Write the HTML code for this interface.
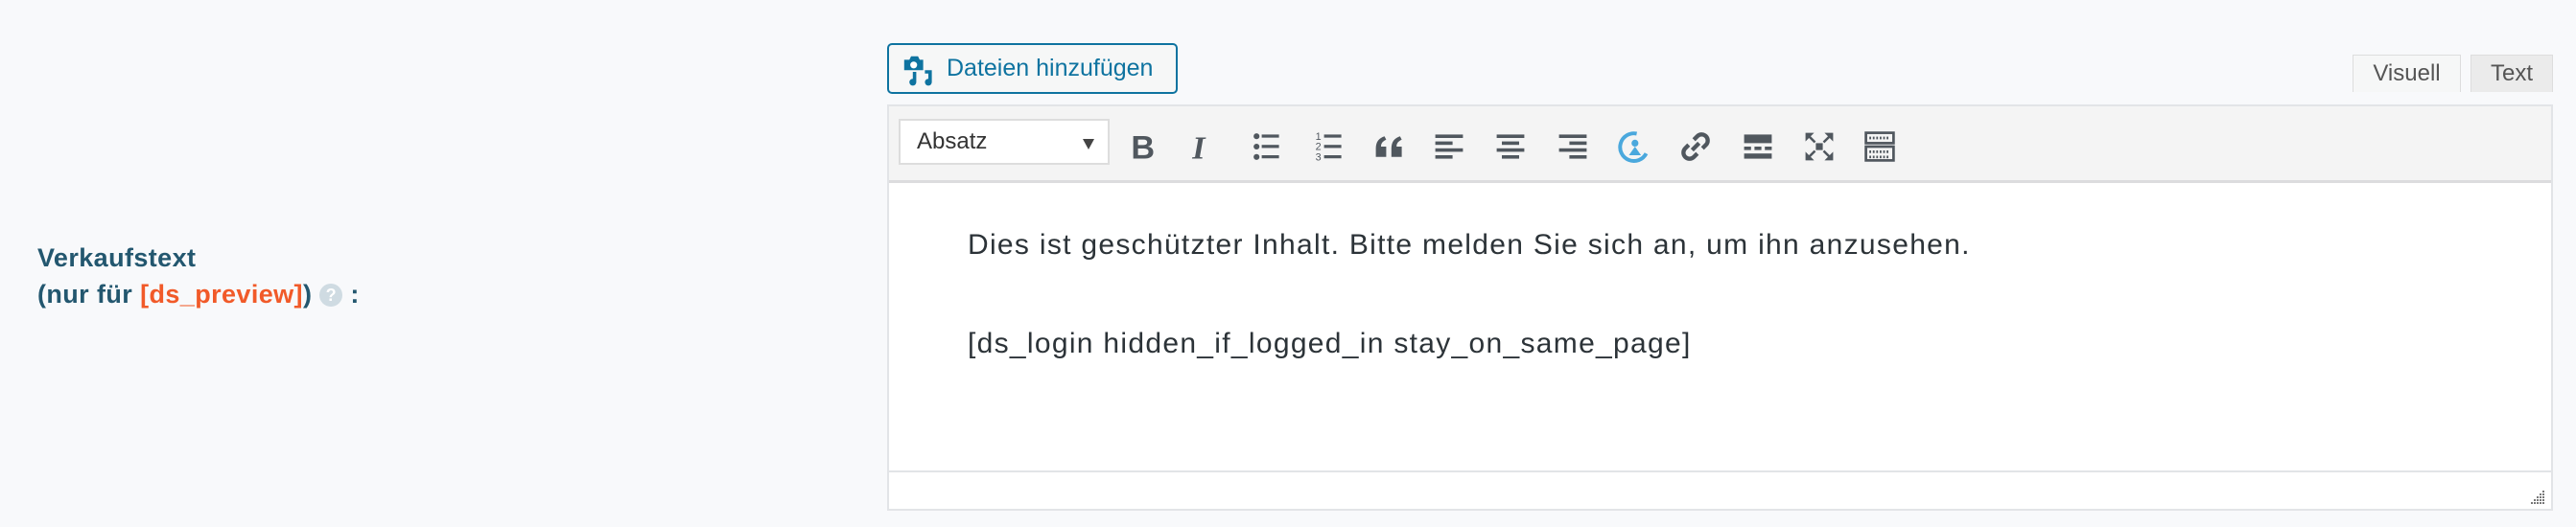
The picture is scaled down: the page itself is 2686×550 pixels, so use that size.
<!DOCTYPE html>
<html><head><meta charset="utf-8"><style>
*{margin:0;padding:0;box-sizing:border-box}
body{width:2686px;height:550px;background:#f8f9fb;font-family:"Liberation Sans",sans-serif;position:relative;overflow:hidden}
.lbl{position:absolute;left:39px;top:250px;font-weight:bold;font-size:27px;letter-spacing:0.4px;line-height:38px;color:#23576f}
.lbl .o{color:#f15a29}
.q{display:inline-block;width:24px;height:24px;border-radius:50%;background:#cfdbe2;color:#fff;font-size:18px;line-height:24px;text-align:center;vertical-align:2px;margin:0 8px}
.btn{position:absolute;left:925px;top:45px;width:303px;height:53px;border:2px solid #0e73a0;border-radius:5px;background:#f6f7f7;color:#0e73a0;font-size:25px;line-height:49px;padding-left:60px}
.btn svg{position:absolute;left:14px;top:10px}
.tab{position:absolute;top:57px;height:39px;border:1px solid #ddd;border-bottom:none;font-size:24px;line-height:38px;text-align:center;color:#555}
.ed{position:absolute;left:925px;top:109px;width:1737px;height:424px;border:2px solid #e2e4e7;background:#fff}
.tb{position:absolute;left:0;top:0;right:0;height:80px;background:#f4f4f4;border-bottom:3px solid #dcdcde}
.sel{position:absolute;left:10px;top:13px;width:220px;height:48px;background:#fff;border:2px solid #ddd;font-size:24px;line-height:44px;padding-left:17px;color:#333}
.sel:after{content:"";position:absolute;right:14px;top:19px;border:6px solid transparent;border-top:11px solid #444;border-bottom:none}
.ic{position:absolute;top:24px;width:36px;height:36px}
.txt{position:absolute;left:82px;font-size:30px;letter-spacing:1.3px;color:#2c3338}
.sb{position:absolute;left:0;right:0;bottom:0;height:40px;border-top:2px solid #e2e4e7}
</style></head><body>
<div class="lbl">Verkaufstext<br>(nur für <span class="o">[ds_preview]</span>)<span class="q">?</span>:</div>
<div class="btn"><svg width="36" height="36" viewBox="0 0 20 20"><path fill="#0e73a0" d="M1 3h3l1-2h4l1 2h2v6H1z"/><circle cx="6.5" cy="6" r="2" fill="#fff"/><path fill="#0e73a0" d="M13 9h4v7a2 2 0 1 1-2-2V11h-2zM8 10v6a2 2 0 1 1-2-2v-4z"/></svg>Dateien hinzufügen</div>
<div class="tab" style="left:2453px;width:113px;background:#f6f7f7">Visuell</div>
<div class="tab" style="left:2576px;width:86px;background:#ebebeb">Text</div>
<div class="ed">
<div class="tb">
<div class="sel">Absatz</div>
<svg class="ic" style="left:247px" viewBox="0 0 20 20"><text x="3" y="17" font-family="Liberation Sans" font-weight="bold" font-size="19" fill="#50575e">B</text></svg>
<svg class="ic" style="left:309px" viewBox="0 0 20 20"><text x="4" y="17" font-family="Liberation Serif" font-style="italic" font-weight="bold" font-size="19" fill="#50575e">I</text></svg>
<svg class="ic" style="left:376px" viewBox="0 0 20 20" fill="#50575e"><circle cx="4" cy="4" r="1.7"/><circle cx="4" cy="10" r="1.7"/><circle cx="4" cy="16" r="1.7"/><rect x="7" y="3" width="10" height="1.8"/><rect x="7" y="9" width="10" height="1.8"/><rect x="7" y="15" width="10" height="1.8"/></svg>
<svg class="ic" style="left:441px" viewBox="0 0 20 20" fill="#50575e"><text x="2" y="6" font-size="6">1</text><text x="2" y="12" font-size="6">2</text><text x="2" y="18" font-size="6">3</text><rect x="7" y="3" width="10" height="1.8"/><rect x="7" y="9" width="10" height="1.8"/><rect x="7" y="15" width="10" height="1.8"/></svg>
<svg class="ic" style="left:504px" viewBox="0 0 20 20" fill="#50575e"><path d="M2 16v-5c0-4 2-6 5-7l1 2c-2 1-3 2-3 4h3v6zM11 16v-5c0-4 2-6 5-7l1 2c-2 1-3 2-3 4h3v6z"/></svg>
<svg class="ic" style="left:566px" viewBox="0 0 20 20" fill="#50575e"><rect x="2" y="3" width="16" height="2"/><rect x="2" y="7" width="10" height="2"/><rect x="2" y="11" width="16" height="2"/><rect x="2" y="15" width="10" height="2"/></svg>
<svg class="ic" style="left:630px" viewBox="0 0 20 20" fill="#50575e"><rect x="2" y="3" width="16" height="2"/><rect x="5" y="7" width="10" height="2"/><rect x="2" y="11" width="16" height="2"/><rect x="5" y="15" width="10" height="2"/></svg>
<svg class="ic" style="left:695px" viewBox="0 0 20 20" fill="#50575e"><rect x="2" y="3" width="16" height="2"/><rect x="8" y="7" width="10" height="2"/><rect x="2" y="11" width="16" height="2"/><rect x="8" y="15" width="10" height="2"/></svg>
<svg class="ic" style="left:758px" viewBox="0 0 20 20"><path d="M12 2.5A8 8 0 1 0 17.5 14" fill="none" stroke="#4aa8dd" stroke-width="2.2"/><circle cx="11" cy="8" r="2" fill="#4aa8dd"/><path d="M7.5 15l3.5-5 3.5 5z" fill="#4aa8dd"/></svg>
<svg class="ic" style="left:823px" viewBox="0 0 20 20" fill="none" stroke="#50575e" stroke-width="2.4"><path d="M8 12l4-4M9 6l2-2a3 3 0 0 1 5 5l-2 2M11 14l-2 2a3 3 0 0 1-5-5l2-2"/></svg>
<svg class="ic" style="left:888px" viewBox="0 0 20 20" fill="#50575e"><rect x="2" y="3" width="16" height="5"/><rect x="2" y="10" width="4" height="2"/><rect x="8" y="10" width="4" height="2"/><rect x="14" y="10" width="4" height="2"/><rect x="2" y="14" width="16" height="3"/></svg>
<svg class="ic" style="left:952px" viewBox="0 0 20 20" fill="#50575e"><path d="M2 2h5L5 4l3 3-1 1-3-3-2 2zM18 2v5l-2-2-3 3-1-1 3-3-2-2zM2 18v-5l2 2 3-3 1 1-3 3 2 2zM18 18h-5l2-2-3-3 1-1 3 3 2-2z"/><rect x="8" y="8" width="4" height="4"/></svg>
<svg class="ic" style="left:1015px" viewBox="0 0 20 20" fill="none" stroke="#50575e" stroke-width="1.5"><rect x="2" y="2" width="16" height="6"/><rect x="2" y="10" width="16" height="8"/><path d="M4 5h12M4 13h12M4 16h12" stroke-dasharray="1 1"/></svg>
</div>
<div class="txt" style="top:128px">Dies ist geschützter Inhalt. Bitte melden Sie sich an, um ihn anzusehen.</div>
<div class="txt" style="top:231px">[ds_login hidden_if_logged_in stay_on_same_page]</div>
<div class="sb"><svg style="position:absolute;right:6px;bottom:4px" width="18" height="18" viewBox="0 0 18 18" fill="#777"><rect x="15" y="3" width="2" height="2"/><rect x="12" y="6" width="2" height="2"/><rect x="15" y="6" width="2" height="2"/><rect x="9" y="9" width="2" height="2"/><rect x="12" y="9" width="2" height="2"/><rect x="15" y="9" width="2" height="2"/><rect x="6" y="12" width="2" height="2"/><rect x="9" y="12" width="2" height="2"/><rect x="12" y="12" width="2" height="2"/><rect x="15" y="12" width="2" height="2"/><rect x="3" y="15" width="2" height="2"/><rect x="6" y="15" width="2" height="2"/><rect x="9" y="15" width="2" height="2"/><rect x="12" y="15" width="2" height="2"/><rect x="15" y="15" width="2" height="2"/></svg></div>
</div>
</body></html>
